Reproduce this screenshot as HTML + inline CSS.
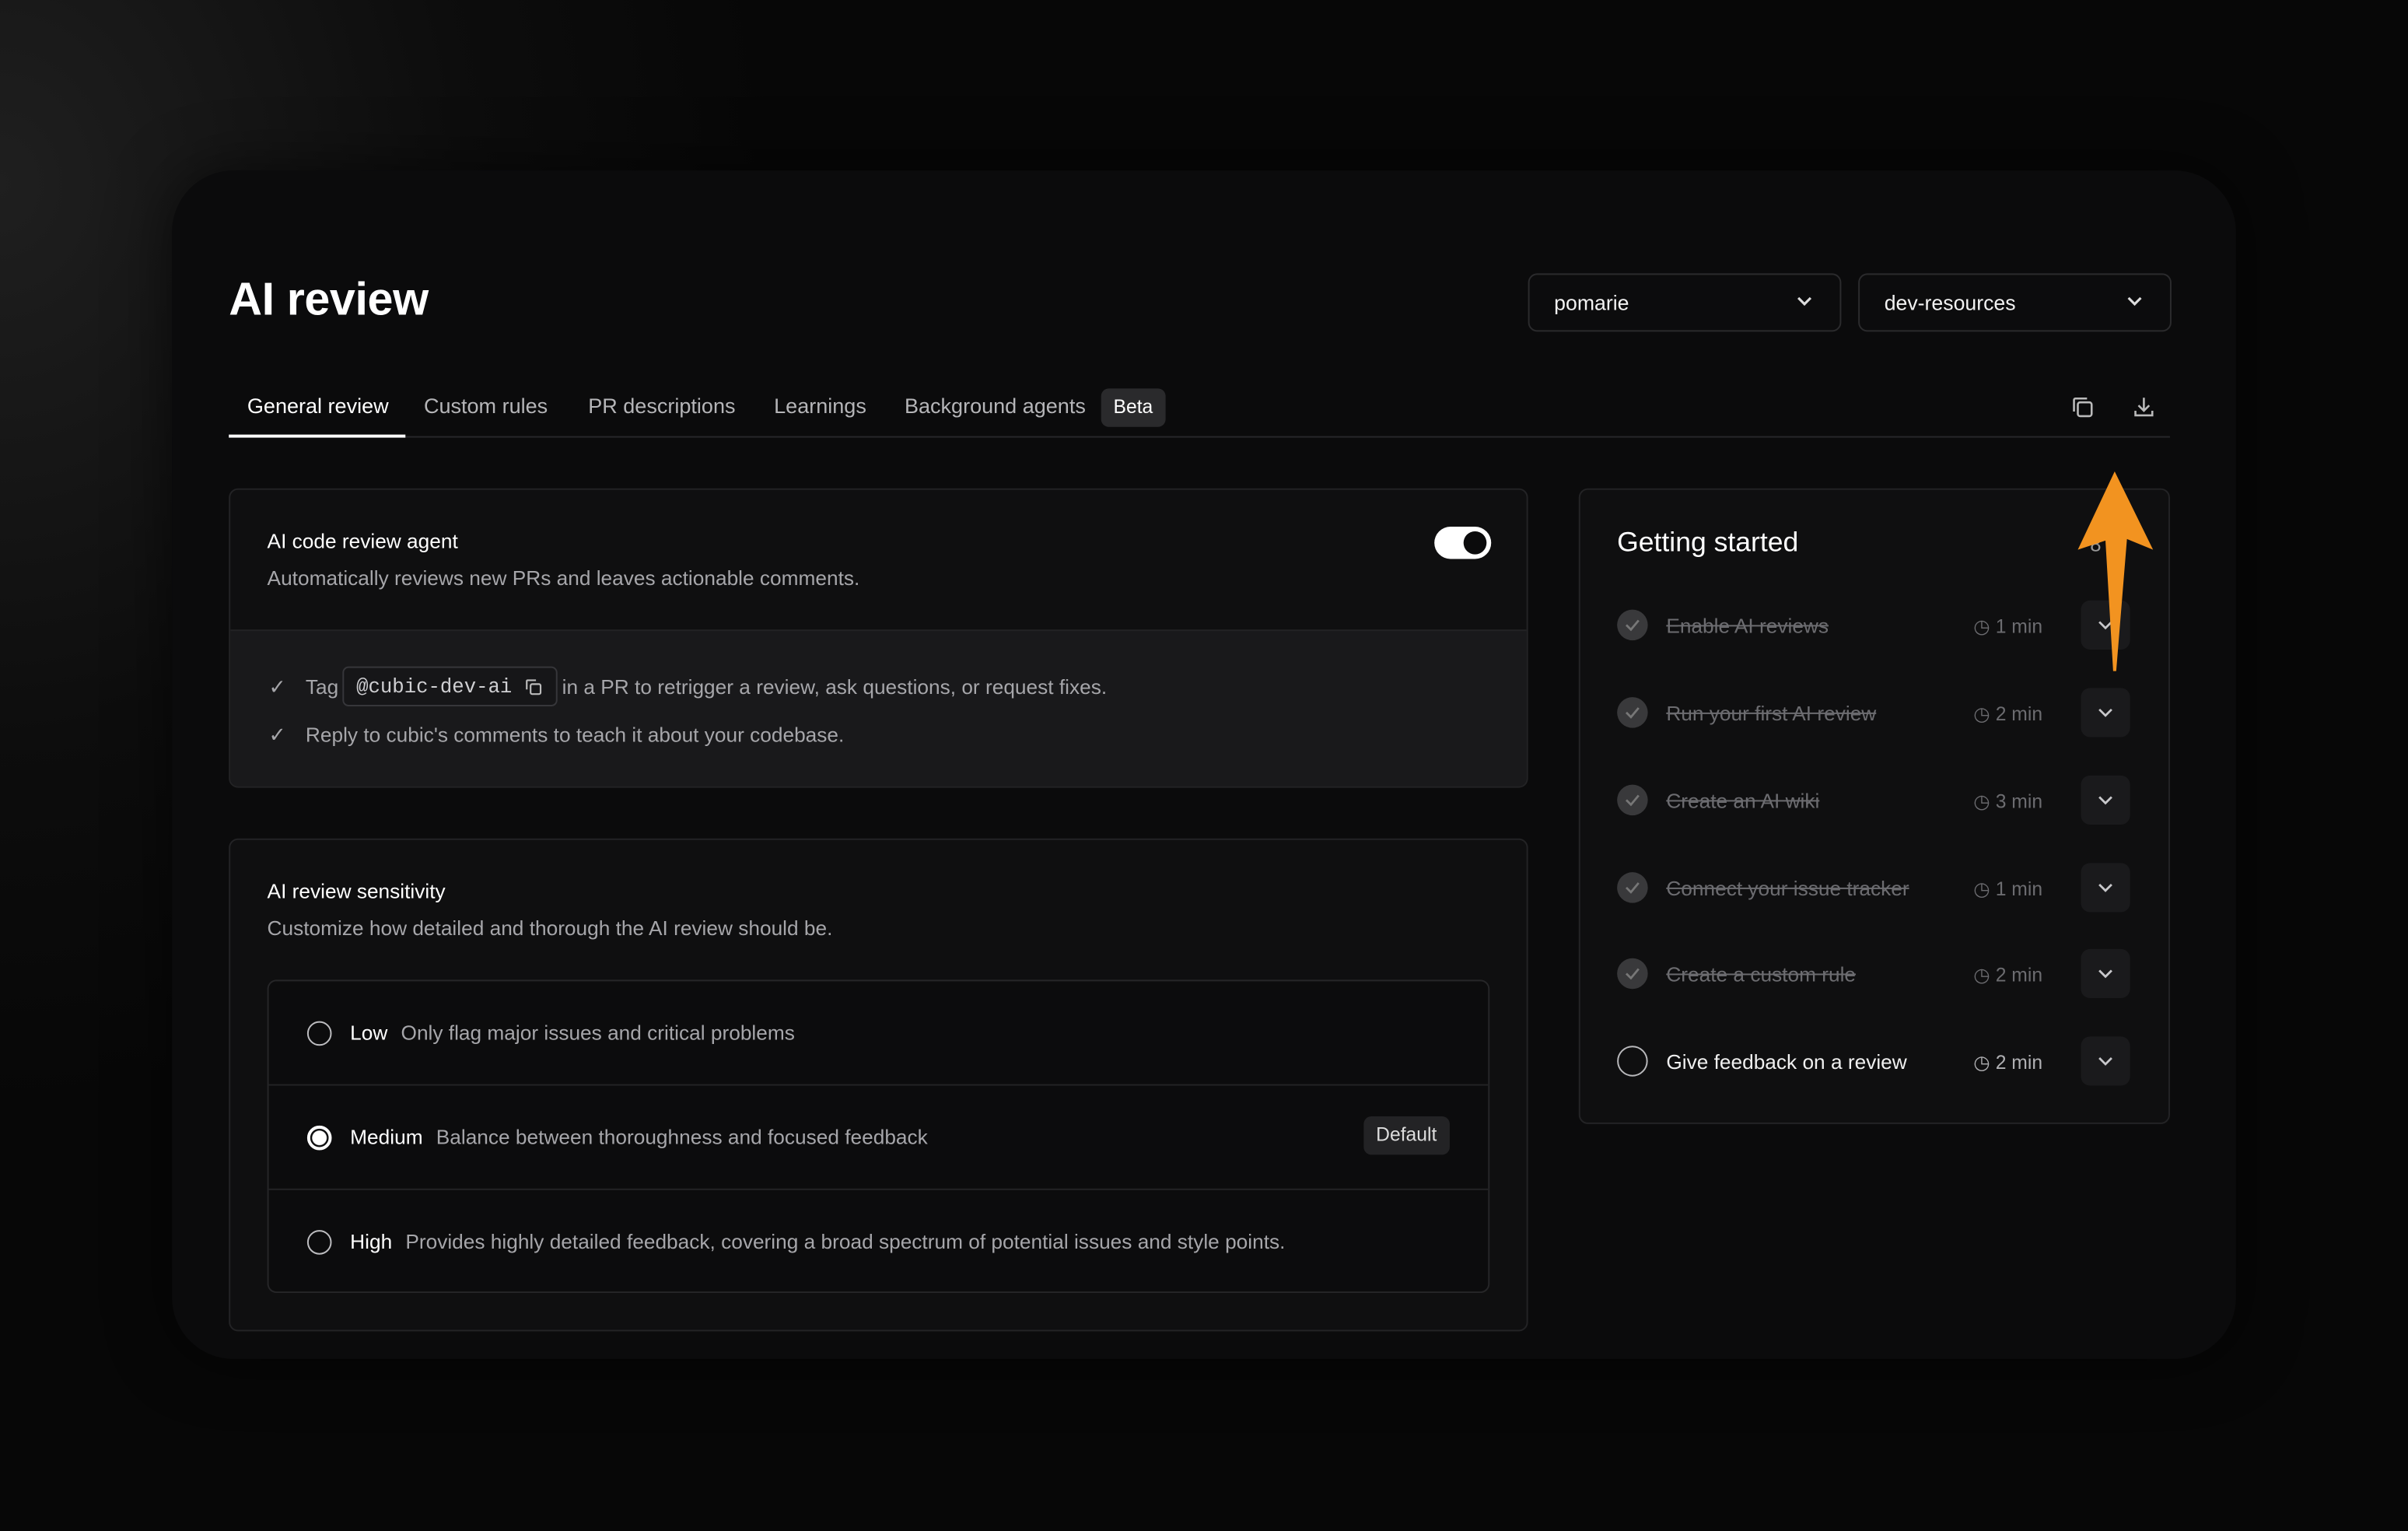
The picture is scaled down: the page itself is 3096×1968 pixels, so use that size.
<!DOCTYPE html>
<html><head><meta charset="utf-8"><style>
*{margin:0;padding:0;box-sizing:border-box}
html,body{width:3096px;height:1968px;overflow:hidden;background:#070707}
#s{position:absolute;left:0;top:0;width:1568px;height:997px;transform:scale(1.97449,1.97392);transform-origin:0 0;font-family:"Liberation Sans",sans-serif;color:#fff;
background:radial-gradient(ellipse 500px 600px at 0px 120px,#1f1f1f 0%,#0d0d0d 60%,#070707 100%),#070707}
.a{position:absolute}
#p{left:112px;top:111px;width:1344px;height:774px;border-radius:40px;background:#0b0b0c;box-shadow:0 0 40px rgba(0,0,0,.6)}
.dd{height:38px;border:1px solid #2b2b2d;border-radius:6px;background:#0c0c0d;font-size:13.5px;padding:11px 16px;color:#f2f2f2}
.dd svg{position:absolute;right:18px;top:14px}
.tab{top:257px;font-size:13.7px;color:#b5b5b8}
.card{border:1px solid #232325;border-radius:6px;background:#0f0f10;overflow:hidden}
.sm{font-size:13.3px}
.g{color:#a6a6aa}
.row{position:absolute;left:0;right:0;height:68px;border-top:1px solid #232325}
.rad{position:absolute;left:25px;top:26px;width:16px;height:16px;border-radius:50%;border:1.5px solid #bdbdc0}
.gs{position:absolute;left:0;width:340px;height:24px}
.ck{position:absolute;left:0;top:0;width:20px;height:20px;border-radius:50%;background:#39393b}
.gt{position:absolute;left:32px;top:3px;font-size:13.3px;color:#6c6c70;text-decoration:line-through}
.tm{position:absolute;left:197px;top:3px;font-size:12.5px;color:#6c6c70;width:80px;text-align:right}
.cb{position:absolute;left:302px;top:-6px;width:32px;height:32px;border-radius:6px;background:#1a1a1c}
</style></head><body><div id="s">
<div id="p" class="a"></div>
<div class="a" style="left:149px;top:179px;font-size:30px;font-weight:bold;letter-spacing:-.2px">AI review</div>
<div class="a dd" style="left:995px;top:178px;width:204px">pomarie<svg width="10" height="7" viewBox="0 0 10 7"><path d="M1 1l4 4 4-4" stroke="#ddd" stroke-width="1.6" fill="none"/></svg></div>
<div class="a dd" style="left:1210px;top:178px;width:204px">dev-resources<svg width="10" height="7" viewBox="0 0 10 7"><path d="M1 1l4 4 4-4" stroke="#ddd" stroke-width="1.6" fill="none"/></svg></div>
<div class="a tab" style="left:161px;color:#fff">General review</div>
<div class="a tab" style="left:276px">Custom rules</div>
<div class="a tab" style="left:383px">PR descriptions</div>
<div class="a tab" style="left:504px">Learnings</div>
<div class="a tab" style="left:589px">Background agents</div>
<div class="a" style="left:717px;top:253px;height:25px;padding:5px 8px;border-radius:5px;background:#2a2a2c;font-size:12.5px">Beta</div>
<div class="a" style="left:149px;top:284px;width:1264px;height:1px;background:#27272a"></div>
<div class="a" style="left:149px;top:283px;width:115px;height:2px;background:#fff"></div>
<svg class="a" style="left:1348px;top:257px" width="16" height="16" viewBox="0 0 16 16" fill="none" stroke="#bbb" stroke-width="1.3"><rect x="5" y="5" width="9" height="9" rx="1.5"/><path d="M11 2.5H3.5a1 1 0 0 0-1 1V11"/></svg>
<svg class="a" style="left:1388px;top:257px" width="16" height="16" viewBox="0 0 16 16" fill="none" stroke="#bbb" stroke-width="1.3"><path d="M8 2v8M4.5 7L8 10.5 11.5 7M2.5 10.5v3h11v-3"/></svg>

<div class="a card" style="left:149px;top:318px;width:846px;height:195px">
 <div class="a" style="left:0;top:91px;width:846px;height:104px;background:#19191b;border-top:1px solid #232325"></div>
 <div class="a sm" style="left:24px;top:26px">AI code review agent</div>
 <div class="a sm g" style="left:24px;top:50px">Automatically reviews new PRs and leaves actionable comments.</div>
 <div class="a" style="left:784px;top:24px;width:37px;height:21px;border-radius:11px;background:#fff"><div class="a" style="left:19px;top:3px;width:15px;height:15px;border-radius:50%;background:#0b0b0c"></div></div>
 <div class="a sm g" style="left:25px;top:121px">✓</div>
 <div class="a sm g" style="left:49px;top:121px">Tag</div>
 <div class="a" style="left:73px;top:115px;width:140px;height:26px;border:1px solid #36363a;border-radius:4px;background:#161618;font-family:'Liberation Mono',monospace;font-size:13px;color:#cfcfd2;padding:5px 8px">@cubic-dev-ai<svg style="position:absolute;left:118px;top:7px" width="11" height="11" viewBox="0 0 11 11" fill="none" stroke="#bbb" stroke-width="1.1"><rect x="3.5" y="3.5" width="6.5" height="6.5" rx="1"/><path d="M7 1H1.5a.5.5 0 0 0-.5.5V7"/></svg></div>
 <div class="a sm g" style="left:216px;top:121px">in a PR to retrigger a review, ask questions, or request fixes.</div>
 <div class="a sm g" style="left:25px;top:152px">✓</div>
 <div class="a sm g" style="left:49px;top:152px">Reply to cubic's comments to teach it about your codebase.</div>
</div>

<div class="a card" style="left:149px;top:546px;width:846px;height:321px">
 <div class="a sm" style="left:24px;top:26px">AI review sensitivity</div>
 <div class="a sm g" style="left:24px;top:50px">Customize how detailed and thorough the AI review should be.</div>
 <div class="a" style="left:24px;top:91px;width:796px;height:204px;border:1px solid #262628;border-radius:6px;background:#0c0c0d;overflow:hidden">
  <div class="row" style="top:0;border:0"><div class="rad"></div><div class="a sm" style="left:53px;top:26px">Low <span class="g" style="margin-left:5px">Only flag major issues and critical problems</span></div></div>
  <div class="row" style="top:67px"><div class="rad" style="border:2px solid #fff;background:radial-gradient(circle,#fff 0 4.5px,#0c0c0d 5px)"></div><div class="a sm" style="left:53px;top:26px">Medium <span class="g" style="margin-left:5px">Balance between thoroughness and focused feedback</span></div>
   <div class="a" style="left:713px;top:20px;height:25px;padding:5px 8px;border-radius:5px;background:#232325;font-size:12.5px;color:#ddd">Default</div></div>
  <div class="row" style="top:135px"><div class="rad"></div><div class="a sm" style="left:53px;top:26px">High <span class="g" style="margin-left:5px">Provides highly detailed feedback, covering a broad spectrum of potential issues and style points.</span></div></div>
 </div>
</div>

<div class="a card" style="left:1028px;top:318px;width:385px;height:414px">
 <div class="a" style="left:24px;top:24px;font-size:18px">Getting started</div>
 <div class="a" style="left:332px;top:28px;font-size:13px;color:#999">8</div>
</div>
<div class="a" style="left:1053px;top:397px;width:340px;height:320px">
 <div class="gs" style="top:0"><div class="ck"></div><div class="gt">Enable AI reviews</div><div class="tm">◷ 1 min</div><div class="cb"></div></div>
 <div class="gs" style="top:57px"><div class="ck"></div><div class="gt">Run your first AI review</div><div class="tm">◷ 2 min</div><div class="cb"></div></div>
 <div class="gs" style="top:114px"><div class="ck"></div><div class="gt">Create an AI wiki</div><div class="tm">◷ 3 min</div><div class="cb"></div></div>
 <div class="gs" style="top:171px"><div class="ck"></div><div class="gt">Connect your issue tracker</div><div class="tm">◷ 1 min</div><div class="cb"></div></div>
 <div class="gs" style="top:227px"><div class="ck"></div><div class="gt">Create a custom rule</div><div class="tm">◷ 2 min</div><div class="cb"></div></div>
 <div class="gs" style="top:284px"><div class="ck" style="background:none;border:1.5px solid #b8b8bb"></div><div class="gt" style="color:#f0f0f0;text-decoration:none">Give feedback on a review</div><div class="tm" style="color:#b0b0b3">◷ 2 min</div><div class="cb"></div></div>
</div>
<svg class="a" style="left:0;top:0" width="1568" height="997">
 <g fill="none" stroke="#c8c8cb" stroke-width="1.4">
  <path d="M1059 407l3 3 5-6M1059 464l3 3 5-6M1059 521l3 3 5-6M1059 578l3 3 5-6M1059 634l3 3 5-6" stroke="#777"/>
  <path d="M1367 405l4 4 4-4M1367 462l4 4 4-4M1367 519l4 4 4-4M1367 576l4 4 4-4M1367 632l4 4 4-4M1367 689l4 4 4-4"/>
 </g>
 <path d="M1377 307L1402 358 1385 351 1378 437 1376 437 1371 352 1353 358Z" fill="#f29320"/>
</svg>
</div></body></html>
